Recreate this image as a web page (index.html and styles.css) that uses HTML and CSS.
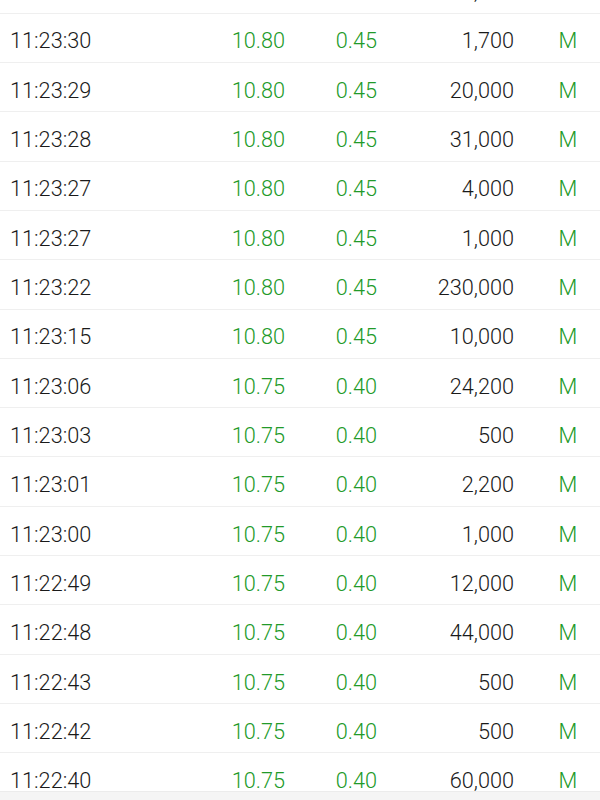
FILE: index.html
```html
<!DOCTYPE html>
<html>
<head>
<meta charset="utf-8">
<link rel="stylesheet" href="styles.css">
</head>
<body>
<div class="list">
  <div class="row"><span class="time">11:23:31</span><span class="price up">10.80</span><span class="chg up">0.45</span><span class="vol">3,000</span><span class="type up">M</span></div>
  <div class="row"><span class="time">11:23:30</span><span class="price up">10.80</span><span class="chg up">0.45</span><span class="vol">1,700</span><span class="type up">M</span></div>
  <div class="row"><span class="time">11:23:29</span><span class="price up">10.80</span><span class="chg up">0.45</span><span class="vol">20,000</span><span class="type up">M</span></div>
  <div class="row"><span class="time">11:23:28</span><span class="price up">10.80</span><span class="chg up">0.45</span><span class="vol">31,000</span><span class="type up">M</span></div>
  <div class="row"><span class="time">11:23:27</span><span class="price up">10.80</span><span class="chg up">0.45</span><span class="vol">4,000</span><span class="type up">M</span></div>
  <div class="row"><span class="time">11:23:27</span><span class="price up">10.80</span><span class="chg up">0.45</span><span class="vol">1,000</span><span class="type up">M</span></div>
  <div class="row"><span class="time">11:23:22</span><span class="price up">10.80</span><span class="chg up">0.45</span><span class="vol">230,000</span><span class="type up">M</span></div>
  <div class="row"><span class="time">11:23:15</span><span class="price up">10.80</span><span class="chg up">0.45</span><span class="vol">10,000</span><span class="type up">M</span></div>
  <div class="row"><span class="time">11:23:06</span><span class="price up">10.75</span><span class="chg up">0.40</span><span class="vol">24,200</span><span class="type up">M</span></div>
  <div class="row"><span class="time">11:23:03</span><span class="price up">10.75</span><span class="chg up">0.40</span><span class="vol">500</span><span class="type up">M</span></div>
  <div class="row"><span class="time">11:23:01</span><span class="price up">10.75</span><span class="chg up">0.40</span><span class="vol">2,200</span><span class="type up">M</span></div>
  <div class="row"><span class="time">11:23:00</span><span class="price up">10.75</span><span class="chg up">0.40</span><span class="vol">1,000</span><span class="type up">M</span></div>
  <div class="row"><span class="time">11:22:49</span><span class="price up">10.75</span><span class="chg up">0.40</span><span class="vol">12,000</span><span class="type up">M</span></div>
  <div class="row"><span class="time">11:22:48</span><span class="price up">10.75</span><span class="chg up">0.40</span><span class="vol">44,000</span><span class="type up">M</span></div>
  <div class="row"><span class="time">11:22:43</span><span class="price up">10.75</span><span class="chg up">0.40</span><span class="vol">500</span><span class="type up">M</span></div>
  <div class="row"><span class="time">11:22:42</span><span class="price up">10.75</span><span class="chg up">0.40</span><span class="vol">500</span><span class="type up">M</span></div>
  <div class="row"><span class="time">11:22:40</span><span class="price up">10.75</span><span class="chg up">0.40</span><span class="vol">60,000</span><span class="type up">M</span></div>
</div>
<div class="bottom-edge"></div>
</body>
</html>
```

FILE: styles.css
```css
html, body {
  margin: 0;
  padding: 0;
  background: #ffffff;
  overflow: hidden;
  height: 800px;
}
body {
  font-family: Roboto, "Noto Sans", sans-serif;
  font-size: 21.7px;
  font-weight: 300;
  color: #1a1a1a;
}
.list {
  margin-top: -35.8px;
}
.row {
  display: grid;
  grid-template-columns: 180px 95px 92px 137px 1fr;
  align-items: center;
  box-sizing: border-box;
  height: 49.33px;
  padding-left: 10px;
  padding-top: 7px;
  border-bottom: 1px solid #efefef;
  line-height: 1;
}
.price, .chg, .vol {
  text-align: right;
}
.type {
  text-align: center;
  padding-left: 22px;
}
.up {
  color: #229a29;
}
.bottom-edge {
  position: fixed;
  left: 0;
  right: 0;
  bottom: 0;
  height: 8px;
  background: #f5f5f5;
  border-top: 1px solid #ececec;
}
```
